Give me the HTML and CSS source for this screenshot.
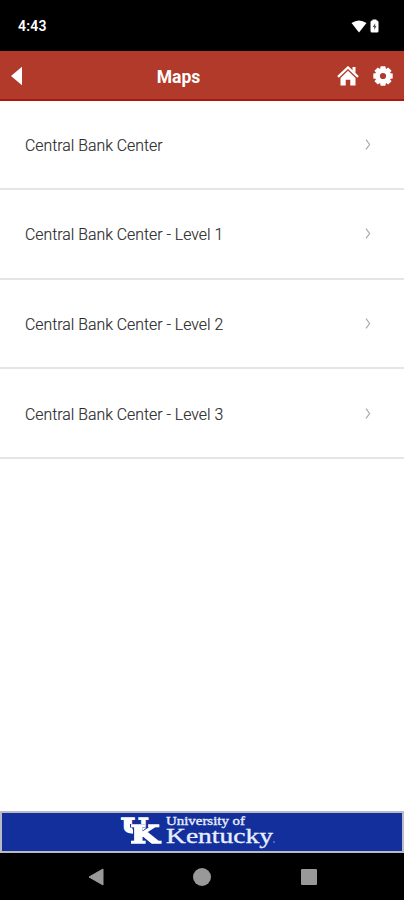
FILE: index.html
```html
<!DOCTYPE html>
<html lang="en">
<head>
<meta charset="utf-8">
<meta name="viewport" content="width=device-width, initial-scale=1">
<title>Maps</title>
<link rel="stylesheet" href="styles.css">
</head>
<body>
<div class="screen">
  <div class="status">
    <span class="clock">4:43</span>
    <div class="indicators">
      <svg class="wifi" width="16" height="13" viewBox="0 0 16 13"><path d="M.5 3Q8-2 15.500 3L8 12.500Z" fill="#fff"/></svg>
      <svg class="battery" width="9" height="14" viewBox="0 0 9 14"><path d="M2.500 1.500V.5h4v1H7q1.500 0 1.500 1.500v9q0 1.500-1.500 1.500H2Q.5 13.500.5 12V3Q.5 1.500 2 1.500Z" fill="#fff"/><path d="M5.200 4.300 2.700 8h1.500v3L6.500 7H5.200Z" fill="#555"/></svg>
    </div>
  </div>
  <header class="bar">
    <svg class="back" width="12" height="20" viewBox="0 0 12 20"><path d="M0 10 11 .8v18.400Z" fill="#fff"/></svg>
    <h1 class="title">Maps</h1>
    <div class="actions">
      <svg width="22" height="20" viewBox="0 0 22 20"><path d="M1 10.800 11 1.500l10 9.300" fill="none" stroke="#fff" stroke-width="2.300"/><path d="M15.500 1h3v6l-3-2.800Z" fill="#fff"/><path d="m11 4.800 7.500 7.200v7.500h-5.200v-5.700H8.700v5.700H3.500V12Z" fill="#fff"/></svg>
      <svg width="20" height="20" viewBox="-10 -10 20 20"><g fill="#fff"><path id="tooth" d="M-2.400-9.700h4.800l.6 4h-6Z"/><use href="#tooth" transform="rotate(45)"/><use href="#tooth" transform="rotate(90)"/><use href="#tooth" transform="rotate(135)"/><use href="#tooth" transform="rotate(180)"/><use href="#tooth" transform="rotate(225)"/><use href="#tooth" transform="rotate(270)"/><use href="#tooth" transform="rotate(315)"/></g><circle r="5.400" fill="none" stroke="#fff" stroke-width="4.600"/></svg>
    </div>
  </header>
  <main class="list">
    <a class="row"><span>Central Bank Center</span><svg class="chevron" width="6" height="11" viewBox="0 0 6 11"><path d="m1 .7 3.600 4.800L1 10.300"/></svg></a>
    <a class="row"><span>Central Bank Center - Level 1</span><svg class="chevron" width="6" height="11" viewBox="0 0 6 11"><path d="m1 .7 3.600 4.800L1 10.300"/></svg></a>
    <a class="row"><span>Central Bank Center - Level 2</span><svg class="chevron" width="6" height="11" viewBox="0 0 6 11"><path d="m1 .7 3.600 4.800L1 10.300"/></svg></a>
    <a class="row"><span>Central Bank Center - Level 3</span><svg class="chevron" width="6" height="11" viewBox="0 0 6 11"><path d="m1 .7 3.600 4.800L1 10.300"/></svg></a>
  </main>
  <div class="sponsor">
    <svg width="160" height="37" viewBox="0 0 160 37">
      <g class="mark">
        <text x="1" y="19" font-size="20" textLength="27" lengthAdjust="spacingAndGlyphs">U</text>
        <text class="front" x="10.500" y="28.500" font-size="24" textLength="29" lengthAdjust="spacingAndGlyphs">K</text>
      </g>
      <g class="wordmark">
        <text x="46" y="11" font-size="12.500" textLength="79" lengthAdjust="spacingAndGlyphs">University of</text>
        <text x="46" y="28.500" font-size="22" textLength="107" lengthAdjust="spacingAndGlyphs">Kentucky</text>
        <circle cx="154" cy="28" r=".4"/>
      </g>
    </svg>
  </div>
  <nav class="nav">
    <svg width="16" height="18" viewBox="0 0 16 18"><path d="M1 9 15 1v16Z" fill="#999" stroke="#999" stroke-linejoin="round"/></svg>
    <span class="dot"></span>
    <span class="square"></span>
  </nav>
</div>
</body>
</html>
```
FILE: styles.css
```css
* { box-sizing: border-box; }
body { margin: 0; background: #fff; font-family: Roboto, sans-serif; }
svg { display: block; flex: none; }
.screen { width: 404px; height: 900px; display: flex; flex-direction: column; }
.status { height: 51px; flex: none; padding: 1px 25px 0 18px; background: #000; display: flex; align-items: center; justify-content: space-between; }
.clock { color: #fff; font-size: 14px; font-weight: 600; letter-spacing: .2px; }
.indicators { display: flex; align-items: center; gap: 3px; }
.bar { height: 50px; flex: none; padding: 1px 11px 0; background: #b23a2a; border-bottom: 2px solid #a81a10; color: #fff; display: grid; grid-template-columns: 60px 1fr 60px; align-items: center; }
.title { margin: 0 0 0 -47px; padding-top: 3px; font-size: 17.500px; line-height: 22px; font-weight: 700; text-align: center; }
.actions { display: flex; align-items: center; justify-content: flex-end; gap: 14px; }
.list { flex: 1; margin-top: -.5px; }
.row { height: 89.600px; padding: 0 33px 0 25px; border-bottom: 2px solid #e5e5e5; display: flex; align-items: center; justify-content: space-between; color: #222; font-size: 15.850px; font-weight: 300; -webkit-text-stroke: .15px #444; }
.row span { padding-top: 2px; }
.chevron path { fill: none; stroke: #aaa; stroke-width: 1.200; }
.sponsor { height: 42px; flex: none; padding-left: 118px; background: #122f9b; border: 2px solid #b8bac8; display: flex; align-items: center; }
.mark { font-family: "DejaVu Serif", serif; font-weight: 700; fill: #fff; stroke: #fff; stroke-width: 1.500px; }
.front { filter: drop-shadow(.7px 0 0 #122f9b) drop-shadow(-.7px 0 0 #122f9b); }
.wordmark { font-family: "Liberation Serif", serif; fill: #e8eeff; stroke: #e8eeff; stroke-width: .35px; }
.nav { height: 47px; flex: none; padding-left: 88px; background: #000; display: flex; align-items: center; }
.dot { width: 18px; height: 18px; margin-left: 89px; border-radius: 50%; background: #999; }
.square { width: 16px; height: 16px; margin-left: 90px; border-radius: 1px; background: #999; }
```
